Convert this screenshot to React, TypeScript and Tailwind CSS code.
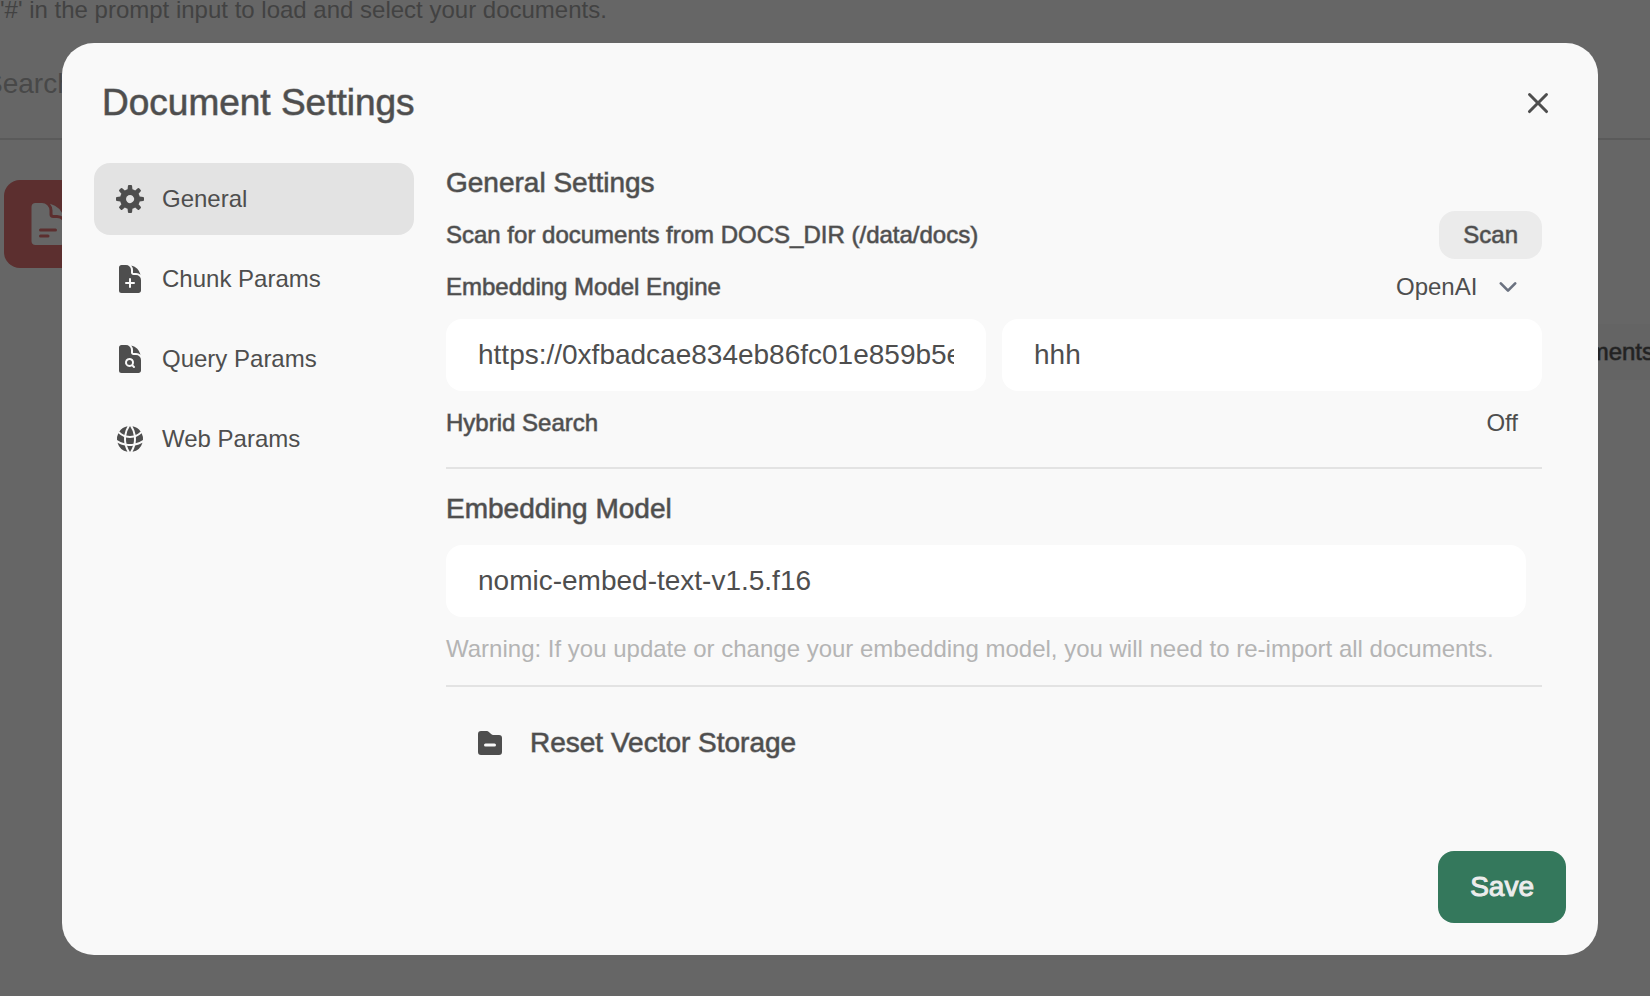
import { useState } from "react";
import {
  HiDocumentPlus,
  HiDocumentMagnifyingGlass,
  HiDocumentText,
  HiGlobeAlt,
} from "react-icons/hi2";

function CogIcon({ className }: { className?: string }) {
  return (
    <svg className={className} viewBox="0 0 16 16" fill="currentColor" aria-hidden="true">
      <path
        fillRule="evenodd"
        clipRule="evenodd"
        d="M6.955 1.45A.5.5 0 0 1 7.452 1h1.096a.5.5 0 0 1 .497.45l.17 1.699c.484.12.94.312 1.356.562l1.321-1.081a.5.5 0 0 1 .67.033l.774.775a.5.5 0 0 1 .034.67l-1.08 1.32c.25.417.44.873.561 1.357l1.699.17a.5.5 0 0 1 .45.497v1.096a.5.5 0 0 1-.45.497l-1.699.17c-.12.484-.312.94-.562 1.356l1.082 1.322a.5.5 0 0 1-.034.67l-.774.774a.5.5 0 0 1-.67.033l-1.322-1.08c-.416.25-.872.44-1.356.561l-.17 1.699a.5.5 0 0 1-.497.45H7.452a.5.5 0 0 1-.497-.45l-.17-1.699a4.973 4.973 0 0 1-1.356-.562L4.108 13.37a.5.5 0 0 1-.67-.033l-.774-.775a.5.5 0 0 1-.034-.67l1.08-1.32a4.971 4.971 0 0 1-.561-1.357l-1.699-.17A.5.5 0 0 1 1 8.548V7.452a.5.5 0 0 1 .45-.497l1.699-.17c.12-.484.312-.94.562-1.356L2.629 4.107a.5.5 0 0 1 .034-.67l.774-.774a.5.5 0 0 1 .67-.033L5.43 3.71a4.97 4.97 0 0 1 1.356-.561l.17-1.699ZM6 8c0 .538.212 1.026.558 1.385l.057.057a2 2 0 0 0 2.828-2.828l-.058-.056A2 2 0 0 0 6 8Z"
      />
    </svg>
  );
}

function CloseIcon({ className }: { className?: string }) {
  return (
    <svg className={className} viewBox="0 0 20 20" fill="currentColor" aria-hidden="true">
      <path d="M6.28 5.22a.75.75 0 0 0-1.06 1.06L8.94 10l-3.72 3.72a.75.75 0 1 0 1.06 1.06L10 11.06l3.72 3.72a.75.75 0 1 0 1.06-1.06L11.06 10l3.72-3.72a.75.75 0 0 0-1.06-1.06L10 8.94 6.28 5.22Z" />
    </svg>
  );
}

function FolderMinusIcon({ className }: { className?: string }) {
  return (
    <svg className={className} viewBox="0 0 16 16" fill="currentColor" aria-hidden="true">
      <path
        fillRule="evenodd"
        clipRule="evenodd"
        d="M3.5 2A1.5 1.5 0 0 0 2 3.5v9A1.5 1.5 0 0 0 3.5 14h9a1.5 1.5 0 0 0 1.5-1.5v-7A1.5 1.5 0 0 0 12.5 4H9.621a1.5 1.5 0 0 1-1.06-.44L7.439 2.44A1.5 1.5 0 0 0 6.38 2H3.5Zm2.25 6.25a.75.75 0 0 0 0 1.5h4.5a.75.75 0 0 0 0-1.5h-4.5Z"
      />
    </svg>
  );
}

function ChevronIcon({ className }: { className?: string }) {
  return (
    <svg className={className} viewBox="0 0 20 20" fill="none" aria-hidden="true">
      <path
        d="M6 8l4 4 4-4"
        stroke="currentColor"
        strokeWidth="1.5"
        strokeLinecap="round"
        strokeLinejoin="round"
      />
    </svg>
  );
}

const tabs = [
  { id: "general", label: "General", Icon: CogIcon },
  { id: "chunk", label: "Chunk Params", Icon: HiDocumentPlus },
  { id: "query", label: "Query Params", Icon: HiDocumentMagnifyingGlass },
  { id: "web", label: "Web Params", Icon: HiGlobeAlt },
];

const field =
  "h-[72px] min-w-0 rounded-2xl bg-white px-8 text-[28px] leading-10 outline-none";

// Liberation Sans has no medium cut; a translucent outline gives the in-between weight.
const medium = "font-medium [-webkit-text-stroke:1px_rgb(78_78_78/0.6)]";

function DocumentsPage() {
  return (
    <div className="absolute inset-0 overflow-hidden text-[#424242]" aria-hidden="true">
      <p className="h-14 whitespace-nowrap text-2xl leading-5">
        '#' in the prompt input to load and select your documents.
      </p>
      <p className="-ml-4 h-[82px] text-[28px] leading-[56px] text-[#484848]">Search</p>
      <div className="h-[2px] bg-[#5a5a5a]" />
      <div className="ml-1 mt-10 flex size-[88px] items-center justify-center rounded-2xl bg-[#5c2f2f] text-[#666666]">
        <HiDocumentText className="size-12" />
      </div>
      <div className="mt-14 ml-auto flex h-14 w-fit items-center bg-[#646464] pl-6 text-2xl font-medium text-[#222222] [-webkit-text-stroke:1px_rgb(34_34_34/0.6)]">
        <span className="-mr-1">Documents</span>
      </div>
    </div>
  );
}

export default function App() {
  const [tab, setTab] = useState("general");
  const [hybrid, setHybrid] = useState(false);

  return (
    <div className="relative flex min-h-screen items-center justify-center bg-[#666666] pr-[52px] pl-[62px] font-['Liberation_Sans',Arial,sans-serif] text-[#4e4e4e]">
      <DocumentsPage />
      <main
        role="dialog"
        aria-labelledby="dialog-title"
        className="relative mt-[2px] flex w-full max-w-[1536px] flex-col rounded-[32px] bg-[#f9f9f9] px-8 pb-8"
      >
        <header className="flex items-center justify-between px-2 pt-8 pb-8">
          <h1 id="dialog-title" className={"text-[37px] leading-[56px] " + medium}>
            Document Settings
          </h1>
          <button type="button" aria-label="Close">
            <CloseIcon className="size-10" />
          </button>
        </header>

        <div className="flex gap-8">
          <nav className="flex w-80 shrink-0 flex-col gap-2">
            {tabs.map(({ id, label, Icon }) => (
              <button
                key={id}
                type="button"
                onClick={() => setTab(id)}
                className={
                  "flex h-[72px] items-center gap-4 rounded-2xl px-5 text-2xl " +
                  (tab === id ? "bg-[#e3e3e3]" : "")
                }
              >
                <Icon className="size-8" />
                {label}
              </button>
            ))}
          </nav>

          <form className="flex min-w-0 flex-1 flex-col" onSubmit={(e) => e.preventDefault()}>
            <div className="flex flex-col pr-6">
              <h2 className={"mb-2 text-[28px] leading-10 " + medium}>General Settings</h2>

              <div className={"mb-1 flex h-12 items-center justify-between text-2xl " + medium}>
                <span>Scan for documents from DOCS_DIR (/data/docs)</span>
                <button type="button" className="h-12 rounded-2xl bg-[#ebebeb] px-6">
                  Scan
                </button>
              </div>

              <div className="mb-2 flex h-12 items-center justify-between text-2xl">
                <label htmlFor="engine" className={medium}>
                  Embedding Model Engine
                </label>
                <div className="relative flex items-center">
                  <select id="engine" className="appearance-none bg-transparent pr-16 outline-none">
                    <option>OpenAI</option>
                  </select>
                  <ChevronIcon className="pointer-events-none absolute right-4 size-9 text-[#6b7280]" />
                </div>
              </div>

              <div className="mb-2 flex gap-4">
                <input
                  aria-label="API Base URL"
                  className={field + " flex-1"}
                  defaultValue="https://0xfbadcae834eb86fc01e859b5e"
                />
                <input aria-label="API Key" className={field + " flex-1"} defaultValue="hhh" />
              </div>

              <div className="flex h-12 items-center justify-between text-2xl">
                <span className={medium}>Hybrid Search</span>
                <button type="button" className="px-6" onClick={() => setHybrid(!hybrid)}>
                  {hybrid ? "On" : "Off"}
                </button>
              </div>

              <hr className="mt-5 mb-5 border-t-2 border-[#e3e3e3]" />

              <label htmlFor="model" className={"mb-4 text-[28px] leading-10 " + medium}>
                Embedding Model
              </label>
              <input
                id="model"
                className={field + " mr-4"}
                defaultValue="nomic-embed-text-v1.5.f16"
              />
              <p className="mt-4 text-2xl text-[#b4b4b4]">
                Warning: If you update or change your embedding model, you will need to re-import all
                documents.
              </p>

              <hr className="mt-5 mb-5 border-t-2 border-[#e3e3e3]" />

              <button
                type="button"
                className={"flex h-[72px] items-center gap-6 px-7 text-[28px] " + medium}
              >
                <FolderMinusIcon className="size-8" />
                Reset Vector Storage
              </button>
            </div>

            <div className="mt-[72px] flex justify-end">
              <button
                type="submit"
                className="h-[72px] rounded-2xl bg-[#34785c] px-8 text-[28px] font-medium text-[#ececec] [-webkit-text-stroke:1px_#ececec]"
              >
                Save
              </button>
            </div>
          </form>
        </div>
      </main>
    </div>
  );
}
